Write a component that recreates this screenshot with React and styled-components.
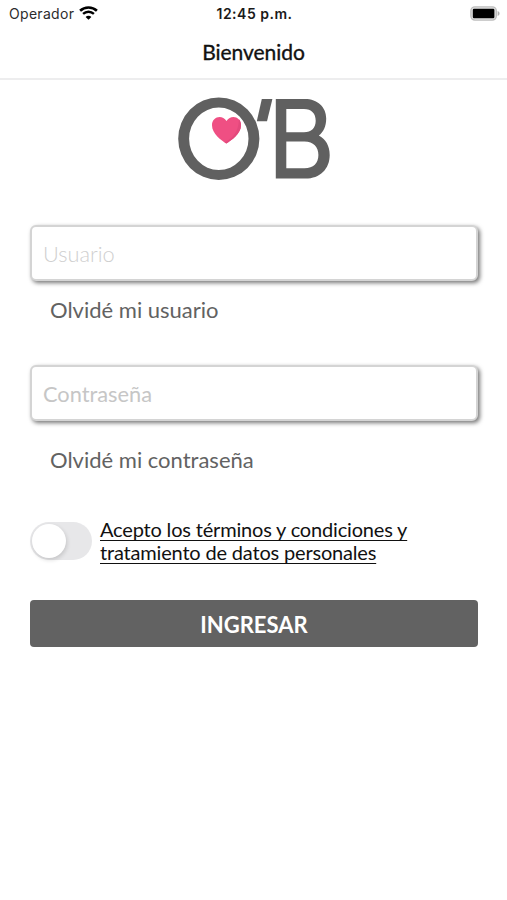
import { useState } from "react";
import styled, { createGlobalStyle } from "styled-components";

const GlobalStyle = createGlobalStyle`
	* {
		box-sizing: border-box;
	}
	body {
		margin: 0;
		background-color: white;
		font-family: Lato, "Liberation Sans", sans-serif;
	}
`;

const Screen = styled.div`
	width: 100%;
	min-height: 900px;
	background-color: white;
	display: flex;
	flex-direction: column;
`;

const StatusBar = styled.div`
	height: 26px;
	padding: 0 7px 0 9px;
	display: grid;
	grid-template-columns: 1fr auto 1fr;
	align-items: center;
	font-family: Inter, "Liberation Sans", sans-serif;
	font-size: 14px;
	color: #2c2c2c;
`;

const Carrier = styled.div`
	display: flex;
	align-items: center;
	gap: 5px;
	letter-spacing: 0.3px;
`;

const Time = styled.div`
	font-weight: 600;
	font-size: 14px;
	letter-spacing: 0.5px;
	color: #1a1a1a;
`;

const Battery = styled.svg`
	justify-self: end;
`;

const Header = styled.header`
	height: 54px;
	padding-bottom: 1px;
	display: flex;
	align-items: center;
	justify-content: center;
	border-bottom: 2px solid #ededee;
`;

const Title = styled.h1`
	margin: 0;
	font-size: 21px;
	font-weight: 400;
	line-height: 24px;
	letter-spacing: -0.05px;
	color: #111;
	-webkit-text-stroke: 0.35px #111;
`;

const Logo = styled.svg`
	display: block;
	margin: 15px auto 0 176px;
`;

const Form = styled.form`
	display: flex;
	flex-direction: column;
	align-items: flex-start;
	padding: 44px 29px 0 30px;
`;

const Input = styled.input`
	width: 100%;
	height: 56px;
	padding: 1px 11px 0;
	border: 2px solid #d4d4d4;
	border-radius: 6px;
	background-color: white;
	box-shadow: 2px 2px 4px 0 #777;
	font-family: inherit;
	font-size: 21.8px;
	color: #606060;
	outline: none;
	&::placeholder {
		color: ${(props) => (props.$light ? "#cfcfcf" : "#c6c6c6")};
		font-weight: ${(props) => (props.$light ? 300 : 400)};
		opacity: 1;
	}
`;

const Forgot = styled.a`
	margin: ${(props) => props.$margin};
	font-size: 22px;
	line-height: 28px;
	color: #626262;
`;

const Terms = styled.div`
	display: flex;
	align-items: center;
	gap: 8px;
`;

const Switch = styled.button`
	width: 62px;
	height: 38px;
	padding: 2px;
	border: none;
	border-radius: 19px;
	background-color: ${(props) => (props.$on ? "#f04e83" : "#e7e7e9")};
	display: flex;
	justify-content: ${(props) => (props.$on ? "flex-end" : "flex-start")};
	cursor: pointer;
`;

const Thumb = styled.span`
	width: 34px;
	height: 34px;
	border-radius: 50%;
	background-color: white;
	box-shadow: 1px 2px 4px 0 #00000026;
`;

const TermsLink = styled.a`
	width: 330px;
	padding-top: 1px;
	font-size: 20px;
	line-height: 23px;
	letter-spacing: -0.18px;
	color: #111;
	text-decoration: underline;
	text-decoration-thickness: 1px;
	text-underline-offset: 3px;
`;

const Submit = styled.button`
	width: 100%;
	height: 47px;
	margin-top: 36px;
	padding: 1px 0 0;
	border: none;
	border-radius: 4px;
	background-color: #626262;
	font-family: inherit;
	font-size: 22px;
	font-weight: 700;
	color: white;
	cursor: pointer;
`;

const WifiIcon = () => (
	<svg width="19" height="15" viewBox="0 .5 19 15" fill="none" stroke="#000">
		<path d="M1.1 5.3C5.8 .8 13.2 .8 17.9 5.3" strokeWidth="2.6" />
		<path d="M4.1 8.4C7.2 5.5 11.8 5.5 14.9 8.4" strokeWidth="2.4" />
		<path d="M9.5 14.3L6.6 11.4C8.2 9.9 10.8 9.9 12.4 11.4Z" fill="#000" stroke="none" />
	</svg>
);

const BatteryIcon = () => (
	<Battery width="30" height="15" viewBox="0 0 30 15">
		<rect x=".9" y=".9" width="25.4" height="13.2" rx="4" fill="#e4e4e4" stroke="#bdbdbd" strokeWidth="1.4" />
		<rect x="2.8" y="2.8" width="21.6" height="9.4" rx="1.2" fill="#000" />
		<path d="M27.6 5.1C30.2 6 30.2 9 27.6 9.9Z" fill="#b0b0b0" />
	</Battery>
);

const BrandLogo = () => (
	<Logo width="156" height="86" viewBox="176 95 156 86" role="img" aria-label="O'B">
		<g fill="#606060" fillRule="evenodd">
			<path d="M218.8 97.4a40.6 41.3 0 1 0 0 82.6a40.6 41.3 0 1 0 0-82.6ZM218.8 107.6a29.7 31.2 0 1 1 0 62.4a29.7 31.2 0 1 1 0-62.4Z" />
			<path d="M261.8 99H272.4L267 121.3H256.8Z" />
			<path d="M275.8 99H305C317.5 99 326.2 107 326.2 118.5C326.2 126.5 323.4 132 318.8 135.6C325.6 139 329.7 146 329.7 155C329.7 169 320 178.6 305.5 178.6H275.8ZM286.3 109V132.2H304C311.5 132.2 315.7 127.7 315.7 120.7C315.7 113.5 311.5 109 304 109ZM286.3 141.6V168.3H304.5C313.5 168.3 318.4 163 318.4 155C318.4 147 313.5 141.6 304.5 141.6Z" />
		</g>
		<path
			d="M226.3 143.4C221.5 140.3 212 134 212 125.2C212 116.7 222 114.1 226.5 121C231 114.1 241 116.7 241 125.2C241 134 231.2 140.3 226.3 143.4Z"
			fill="#ef4f83"
		/>
		<path d="M241 125.2C241 134 231.2 140.3 226.3 143.4L224.6 142.3C232 138.5 238.5 132.5 239 119.2C240.3 120.8 241 122.8 241 125.2Z" fill="#e3497c" />
	</Logo>
);

const App = () => {
	const [accepted, setAccepted] = useState(false);

	return (
		<Screen>
			<GlobalStyle />
			<StatusBar>
				<Carrier>
					Operador
					<WifiIcon />
				</Carrier>
				<Time>12:45 p.m.</Time>
				<BatteryIcon />
			</StatusBar>
			<Header>
				<Title>Bienvenido</Title>
			</Header>
			<BrandLogo />
			<Form onSubmit={(e) => e.preventDefault()}>
				<Input
					type="text"
					name="usuario"
					placeholder="Usuario"
					$light
				/>
				<Forgot $margin="15px 0 41px 20px">Olvidé mi usuario</Forgot>
				<Input
					type="password"
					name="contrasena"
					placeholder="Contraseña"
				/>
				<Forgot $margin="25px 0 43px 20px">Olvidé mi contraseña</Forgot>
				<Terms>
					<Switch
						type="button"
						role="switch"
						aria-checked={accepted}
						$on={accepted}
						onClick={() => setAccepted(!accepted)}
					>
						<Thumb />
					</Switch>
					<TermsLink>
						Acepto los términos y condiciones y tratamiento de datos personales
					</TermsLink>
				</Terms>
				<Submit type="submit">INGRESAR</Submit>
			</Form>
		</Screen>
	);
};

export default App;
